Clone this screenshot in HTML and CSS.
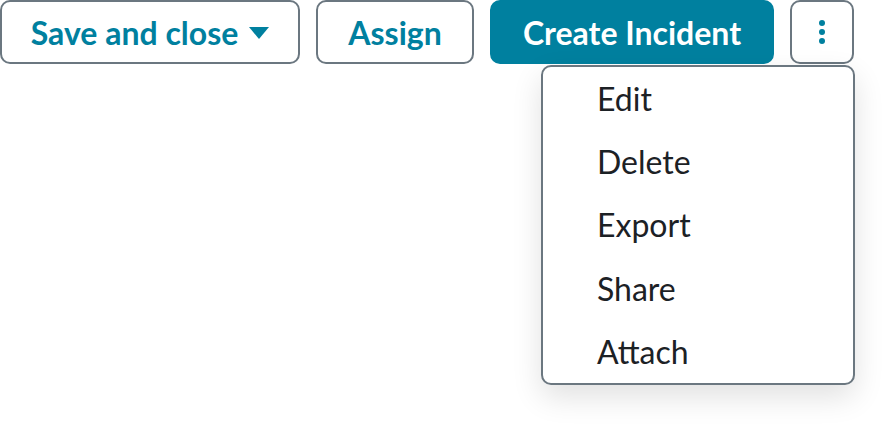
FILE: index.html
```html
<!DOCTYPE html>
<html lang="en">
<head>
<meta charset="utf-8">
<title>Actions</title>
<link rel="stylesheet" href="styles.css">
</head>
<body>
<div class="toolbar">
  <button class="btn btn-outline btn-save">Save and close <span class="caret"></span></button>
  <button class="btn btn-outline btn-assign">Assign</button>
  <button class="btn btn-primary">Create Incident</button>
  <div class="more">
    <button class="btn btn-outline btn-kebab" aria-label="More actions">
      <svg width="8" height="26" viewBox="0 0 8 26"><circle cx="4" cy="4" r="3" fill="#00809f"/><circle cx="4" cy="13" r="3" fill="#00809f"/><circle cx="4" cy="22" r="3" fill="#00809f"/></svg>
    </button>
    <ul class="menu">
      <li class="menu-item">Edit</li>
      <li class="menu-item">Delete</li>
      <li class="menu-item">Export</li>
      <li class="menu-item">Share</li>
      <li class="menu-item">Attach</li>
    </ul>
  </div>
</div>
</body>
</html>
```

FILE: styles.css
```css
html, body {
  margin: 0;
  padding: 0;
  background: #ffffff;
  font-family: Lato, "Open Sans", sans-serif;
  min-height: 100vh;
}

.toolbar {
  display: flex;
  gap: 16px;
  align-items: flex-start;
}

.btn {
  box-sizing: border-box;
  height: 64px;
  margin: 0;
  font-family: Lato, "Open Sans", sans-serif;
  font-size: 32px;
  font-weight: 700;
  border-radius: 10px;
  display: flex;
  align-items: center;
  justify-content: center;
  white-space: nowrap;
  cursor: pointer;
  flex: none;
}

.btn-outline {
  background: #ffffff;
  border: 2px solid #6b7780;
  color: #00809f;
}

.btn-save {
  width: 300px;
  padding: 0;
  gap: 11px;
}

.caret {
  width: 0;
  height: 0;
  border-left: 10px solid transparent;
  border-right: 10px solid transparent;
  border-top: 12px solid #00809f;
  margin-top: 1px;
}

.btn-assign {
  width: 158px;
}

.btn-primary {
  width: 284px;
  background: #00809f;
  border: 2px solid #00809f;
  color: #ffffff;
}

.more {
  width: 64px;
  display: flex;
  flex-direction: column;
  align-items: flex-end;
  gap: 1px;
}

.btn-kebab {
  width: 64px;
  padding: 0;
}

.menu {
  flex: none;
  box-sizing: border-box;
  width: 314px;
  margin: 0 -1px 0 0;
  padding: 0;
  list-style: none;
  background: #ffffff;
  border: 2px solid #6b7780;
  border-radius: 10px;
  box-shadow: 0 12px 30px rgba(0, 0, 0, 0.12);
}

.menu-item {
  height: 63.2px;
  display: flex;
  align-items: center;
  padding-left: 54px;
  font-size: 32px;
  color: #1c2125;
}
```
